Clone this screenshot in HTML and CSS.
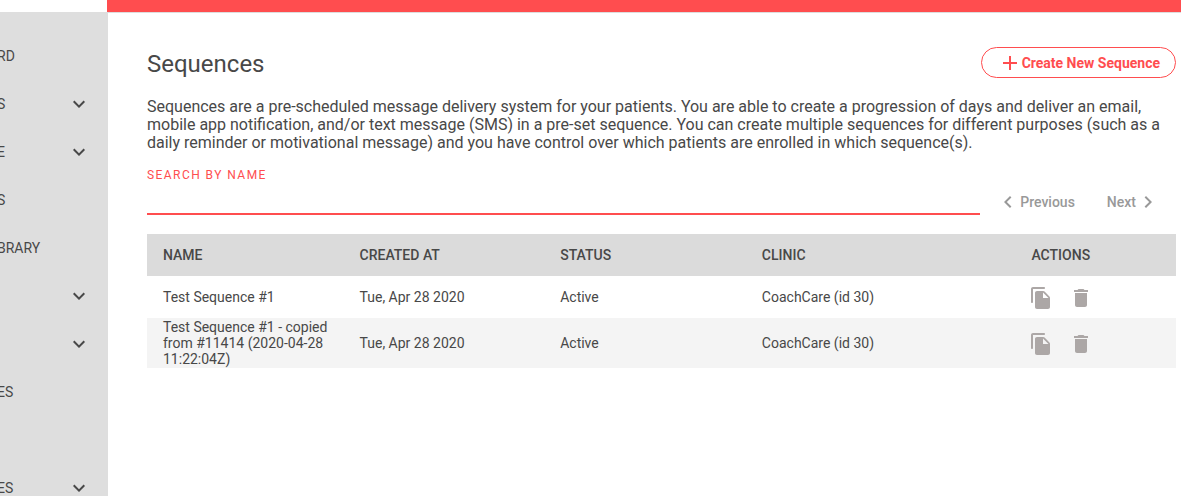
FILE: index.html
```html
<!DOCTYPE html>
<html lang="en">
<head>
    <meta charset="UTF-8">
    <meta name="viewport" content="width=device-width, initial-scale=1.0">
    <title>Sequences</title>
    <link rel="stylesheet" href="styles.css">
</head>
<body>
    <!-- Shared icons -->
    <svg class="sprite" aria-hidden="true">
        <symbol id="chevron-down" viewBox="0 0 24 24"><path d="M7.41 8.59L12 13.17l4.59-4.58L18 10l-6 6-6-6z"/></symbol>
        <symbol id="chevron-left" viewBox="0 0 24 24"><path d="M15.41 7.41L14 6l-6 6 6 6 1.41-1.41L10.83 12z"/></symbol>
        <symbol id="chevron-right" viewBox="0 0 24 24"><path d="M10 6L8.59 7.41 13.17 12l-4.58 4.59L10 18l6-6z"/></symbol>
        <symbol id="plus" viewBox="0 0 24 24"><path d="M19 13h-6v6h-2v-6H5v-2h6V5h2v6h6z"/></symbol>
        <symbol id="copy" viewBox="0 0 24 24"><path d="M15 1H4c-1.1 0-2 .9-2 2v13c0 .55.45 1 1 1s1-.45 1-1V3h11c.55 0 1-.45 1-1s-.45-1-1-1zm.59 4.590l4.830 4.830c.37.37.58.88.58 1.410V21c0 1.100-.9 2-2 2H7.990C6.890 23 6 22.100 6 21l.01-14c0-1.100.89-2 1.990-2h6.170c.53 0 1.040.21 1.420.59zM14 12h5.500L14 6.500V12z"/></symbol>
        <symbol id="trash" viewBox="0 0 24 24"><path d="M6 19c0 1.100.9 2 2 2h8c1.100 0 2-.9 2-2V7H6v12zM19 4h-3.500l-1-1h-5l-1 1H5v2h14V4z"/></symbol>
    </svg>

    <nav class="sidebar">
        <ul class="menu">
            <li><a href="#">RD</a></li>
            <li><a href="#">S <svg class="icon"><use href="#chevron-down"/></svg></a></li>
            <li><a href="#">E <svg class="icon"><use href="#chevron-down"/></svg></a></li>
            <li><a href="#">S</a></li>
            <li><a href="#">BRARY</a></li>
            <li><a href="#"><svg class="icon"><use href="#chevron-down"/></svg></a></li>
            <li><a href="#"><svg class="icon"><use href="#chevron-down"/></svg></a></li>
            <li><a href="#">ES</a></li>
            <li><a href="#"></a></li>
            <li><a href="#">ES <svg class="icon"><use href="#chevron-down"/></svg></a></li>
        </ul>
    </nav>

    <div class="page">
        <header class="topbar"></header>
        <main class="content">
            <div class="title-row">
                <h1>Sequences</h1>
                <button type="button" class="create"><svg class="icon"><use href="#plus"/></svg>Create New Sequence</button>
            </div>

            <p class="description">Sequences are a pre-scheduled message delivery system for your patients. You are able to create a progression of days and deliver an email, mobile app notification, and/or text message (SMS) in a pre-set sequence. You can create multiple sequences for different purposes (such as a daily reminder or motivational message) and you have control over which patients are enrolled in which sequence(s).</p>

            <div class="search-row">
                <div class="search">
                    <label for="search">SEARCH BY NAME</label>
                    <input type="text" id="search">
                </div>
                <div class="pager">
                    <button type="button" disabled><svg class="icon"><use href="#chevron-left"/></svg>Previous</button>
                    <button type="button" disabled>Next<svg class="icon"><use href="#chevron-right"/></svg></button>
                </div>
            </div>

            <table class="sequences">
                <thead>
                    <tr>
                        <th class="col-name">NAME</th>
                        <th class="col-created">CREATED AT</th>
                        <th class="col-status">STATUS</th>
                        <th class="col-clinic">CLINIC</th>
                        <th>ACTIONS</th>
                    </tr>
                </thead>
                <tbody>
                    <tr>
                        <td>Test Sequence #1</td>
                        <td>Tue, Apr 28 2020</td>
                        <td>Active</td>
                        <td>CoachCare (id 30)</td>
                        <td>
                            <div class="actions">
                                <button type="button" aria-label="Copy"><svg class="icon"><use href="#copy"/></svg></button>
                                <button type="button" aria-label="Delete"><svg class="icon"><use href="#trash"/></svg></button>
                            </div>
                        </td>
                    </tr>
                    <tr>
                        <td>Test Sequence #1 - copied from #11414 (2020-04-28 11:22:04Z)</td>
                        <td>Tue, Apr 28 2020</td>
                        <td>Active</td>
                        <td>CoachCare (id 30)</td>
                        <td>
                            <div class="actions">
                                <button type="button" aria-label="Copy"><svg class="icon"><use href="#copy"/></svg></button>
                                <button type="button" aria-label="Delete"><svg class="icon"><use href="#trash"/></svg></button>
                            </div>
                        </td>
                    </tr>
                </tbody>
            </table>
        </main>
    </div>
</body>
</html>
```
FILE: styles.css
```css
* {
    box-sizing: border-box;
}

body {
    margin: 0;
    display: flex;
    height: 100vh;
    overflow: hidden;
    font-family: Roboto, sans-serif;
    font-size: 14px;
    color: #484848;
    background: #fff;
}

button {
    padding: 0;
    border: none;
    background: none;
    font: inherit;
    color: inherit;
    cursor: pointer;
}

.sprite {
    display: none;
}

.icon {
    flex: none;
    width: 24px;
    height: 24px;
    fill: currentColor;
}

/* Sidebar */
.sidebar {
    flex: none;
    width: 108px;
    margin-top: 12px;
    padding-top: 20px;
    background: #dedede;
    overflow: hidden;
}

.menu {
    margin: 0 0 0 -3px;
    padding: 0;
    list-style: none;
}

.menu a {
    display: flex;
    align-items: center;
    height: 48px;
    padding-right: 17px;
    color: inherit;
    text-decoration: none;
}

.menu .icon {
    margin-left: auto;
}

/* Page */
.page {
    flex: 1;
    min-width: 0;
}

.topbar {
    height: 13px;
    margin-left: -1px;
    background: #ff4d4f;
    border-bottom: 1px solid #ddd;
}

.content {
    padding: 34px 5px 0 39px;
}

.title-row {
    display: flex;
    justify-content: space-between;
    align-items: flex-start;
}

h1 {
    margin: 0;
    font-size: 24px;
    font-weight: 400;
    line-height: 34px;
}

.create {
    display: flex;
    align-items: center;
    height: 31px;
    padding: 0 15px 0 16px;
    border: 1px solid #ff4d4f;
    border-radius: 16px;
    color: #ff4d4f;
    font-weight: 700;
}

.description {
    margin: 17px 0 15px;
    font-size: 16px;
    line-height: 18px;
}

.search-row {
    display: flex;
    align-items: flex-end;
    margin-bottom: 19px;
}

.search {
    flex: 1;
}

.search label {
    display: block;
    font-size: 12px;
    line-height: 16px;
    letter-spacing: 0.12em;
    color: #ff4d4f;
}

.search input {
    display: block;
    width: 100%;
    height: 32px;
    padding: 0;
    border: none;
    border-bottom: 2px solid #ff4d4f;
    outline: none;
    font: inherit;
    color: inherit;
}

.pager {
    display: flex;
    gap: 32px;
    padding: 0 16px 1px;
}

.pager button {
    display: flex;
    align-items: center;
    color: #999;
    font-weight: 500;
}

/* Table */
.sequences {
    width: 100%;
    table-layout: fixed;
    border-collapse: collapse;
    line-height: 16px;
}

.sequences th,
.sequences td {
    height: 42px;
    padding: 0 16px;
    text-align: left;
}

.sequences th {
    background: #dbdbdb;
    font-weight: 500;
}

.sequences tbody tr:nth-child(even) {
    background: #f4f4f4;
}

.sequences tbody tr:nth-child(even) td {
    height: 50px;
}

.col-name {
    width: 19.1%;
}

.col-created {
    width: 19.5%;
}

.col-status {
    width: 19.6%;
}

.col-clinic {
    width: 26.2%;
}

.actions {
    display: flex;
    gap: 16px;
    margin-left: -2px;
    padding-top: 2px;
    color: #aca7a6;
}

.actions .icon {
    display: block;
}
```
